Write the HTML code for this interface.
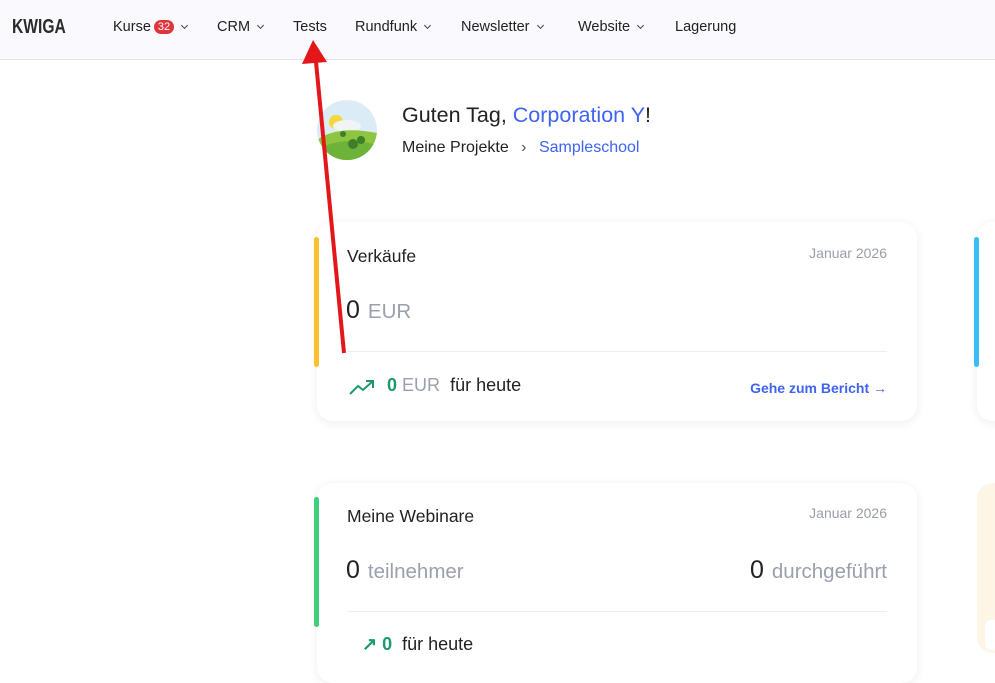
<!DOCTYPE html>
<html><head><meta charset="utf-8"><style>
*{margin:0;padding:0;box-sizing:border-box}
body{width:995px;height:643px;overflow:hidden;background:#fff;font-family:"Liberation Sans",sans-serif;color:#222;position:relative}
.nav{position:absolute;left:0;top:0;width:995px;height:60px;background:#f9f9fe;border-bottom:1px solid #e2e3ea}
.nav .logo{position:absolute;left:12px;top:16px;font-weight:bold;font-size:20px;color:#2b2b2b;transform:scaleX(.78);transform-origin:left}
.nav .it{position:absolute;top:19px;font-size:14.5px;color:#222}
.car{display:inline-block;width:5px;height:5px;border-right:1.3px solid #444;border-bottom:1.3px solid #444;transform:rotate(45deg);margin-left:8px;position:relative;top:-3px}
.badge{display:inline-block;background:#e0353b;color:#fff;font-size:11px;border-radius:8px;padding:1px 4px;margin-left:3px;position:relative;top:-1px}
.card{position:absolute;background:#fff;border-radius:16px;box-shadow:0 2px 10px rgba(30,40,90,.08)}
.bar{position:absolute;width:5px;border-radius:3px}
.t{position:absolute;font-size:17.5px;color:#222}
.d{position:absolute;font-size:14px;color:#9a9ea8;text-align:right;right:108px}
.big{position:absolute;font-size:25px;color:#222}
.big span{color:#9aa0ac;font-size:20.5px;margin-left:8px}
.hr{position:absolute;height:1px;background:#eceef2}
</style></head><body>
<div class="nav">
<div class="logo">KWIGA</div>
<div class="it" style="left:113px">Kurse<span class="badge">32</span><span class="car"></span></div>
<div class="it" style="left:217px">CRM<span class="car"></span></div>
<div class="it" style="left:293px">Tests</div>
<div class="it" style="left:355px">Rundfunk<span class="car"></span></div>
<div class="it" style="left:461px">Newsletter<span class="car"></span></div>
<div class="it" style="left:578px">Website<span class="car"></span></div>
<div class="it" style="left:675px">Lagerung</div>
</div>

<svg style="position:absolute;left:317px;top:100px" width="60" height="60" viewBox="0 0 60 60">
<defs><clipPath id="c"><circle cx="30" cy="30" r="30"/></clipPath></defs>
<g clip-path="url(#c)">
<rect width="60" height="60" fill="#dcecf6"/>
<circle cx="19" cy="22" r="7" fill="#f6d73b"/>
<ellipse cx="30" cy="26" rx="14" ry="6" fill="#f1f3f5"/>
<path d="M0 40 Q20 25 60 33 V60 H0Z" fill="#8cc640"/>
<path d="M0 50 Q25 35 60 45 V60 H0Z" fill="#6db33a"/>
<circle cx="36" cy="44" r="5" fill="#3d7f2a"/><circle cx="44" cy="40" r="4" fill="#3d7f2a"/><circle cx="26" cy="34" r="3" fill="#3d7f2a"/>
</g></svg>
<div style="position:absolute;left:402px;top:103px;font-size:21.5px;color:#222">Guten Tag, <span style="color:#3f63f3">Corporation Y</span>!</div>
<div style="position:absolute;left:402px;top:139px;font-size:16px;color:#222">Meine Projekte <span style="margin:0 8px;color:#555">›</span> <span style="color:#3f63f3">Sampleschool</span></div>

<div class="card" style="left:317px;top:222px;width:600px;height:199px"></div>
<div class="bar" style="left:314px;top:237px;height:130px;background:#fbc02d"></div>
<div class="t" style="left:347px;top:246px">Verkäufe</div>
<div class="d" style="top:245px">Januar 2026</div>
<div class="big" style="left:346px;top:296px">0<span>EUR</span></div>
<div class="hr" style="left:347px;top:351px;width:540px"></div>
<svg style="position:absolute;left:348px;top:378px" width="28" height="18" viewBox="0 0 28 18"><path d="M2 16 L10 8 L15 12 L25 3 M18 3 H25 V10" fill="none" stroke="#1d9a6c" stroke-width="2"/></svg>
<div style="position:absolute;left:387px;top:375px;font-size:18px"><b style="color:#1d9a6c">0</b> <span style="color:#9aa0ac">EUR</span> &nbsp;<span style="color:#222">für heute</span></div>
<div style="position:absolute;right:108px;top:380px;font-size:14px;color:#3f63f3;font-weight:bold">Gehe zum Bericht →</div>

<div class="card" style="left:977px;top:222px;width:60px;height:199px"></div>
<div class="bar" style="left:974px;top:237px;height:130px;background:#38bdf8"></div>

<div class="card" style="left:317px;top:483px;width:600px;height:200px"></div>
<div class="bar" style="left:314px;top:497px;height:130px;background:#3ecf7d"></div>
<div class="t" style="left:347px;top:506px">Meine Webinare</div>
<div class="d" style="top:505px">Januar 2026</div>
<div class="big" style="left:346px;top:556px">0<span>teilnehmer</span></div>
<div class="big" style="right:108px;top:556px">0<span>durchgeführt</span></div>
<div class="hr" style="left:347px;top:611px;width:540px"></div>
<div style="position:absolute;left:362px;top:634px;font-size:18px"><b style="color:#1d9a6c">↗ 0</b> &nbsp;für heute</div>
<div style="position:absolute;left:977px;top:483px;width:60px;height:170px;background:#fdf5e6;border-radius:16px"></div>
<div style="position:absolute;left:985px;top:620px;width:20px;height:30px;background:#fff;border-radius:6px"></div>

<svg style="position:absolute;left:0;top:0" width="995" height="643"><line x1="344" y1="353" x2="316" y2="62" stroke="#e3161a" stroke-width="4"/><polygon points="313,40 302,64 327,62" fill="#e3161a"/></svg>
</body></html>
